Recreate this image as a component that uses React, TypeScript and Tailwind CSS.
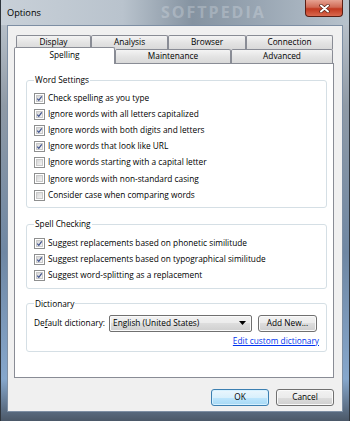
import React from 'react';

const wordSettings = [
  { label: 'Check spelling as you type', checked: true },
  { label: 'Ignore words with all letters capitalized', checked: true },
  { label: 'Ignore words with both digits and letters', checked: true },
  { label: 'Ignore words that look like URL', checked: true },
  { label: 'Ignore words starting with a capital letter', checked: false },
  { label: 'Ignore words with non-standard casing', checked: false },
  { label: 'Consider case when comparing words', checked: false },
];

const spellChecking = [
  { label: 'Suggest replacements based on phonetic similitude', checked: true },
  { label: 'Suggest replacements based on typographical similitude', checked: true },
  { label: 'Suggest word-splitting as a replacement', checked: true },
];

const tabBase =
  'flex items-center justify-center border border-[#898c95] rounded-t-[2px] bg-[linear-gradient(to_bottom,#f4f4f4,#e4e4e4_50%,#d9d9d9)]';

const btnBase =
  'flex items-center justify-center rounded-[3px] border text-[8.3px] h-[17px] w-[58px]';

function CheckBox({ checked }: { checked: boolean }) {
  return (
    <div className="w-[11px] h-[11px] shrink-0 border border-[#8e8f8f] bg-white p-px">
      <div className="w-full h-full bg-[linear-gradient(135deg,#d6d6d6,#f4f4f4)] border border-[#c9c9c9] flex items-center justify-center">
        {checked && (
          <svg width="9" height="9" viewBox="0 0 9 9" className="-m-px">
            <path d="M1.6 4.6 L3.6 6.8 L7.4 1.8" fill="none" stroke="#3b4f8c" strokeWidth="1.5" />
          </svg>
        )}
      </div>
    </div>
  );
}

function Row({ label, checked }: { label: string; checked: boolean }) {
  return (
    <div className="flex items-center h-[16.17px]">
      <CheckBox checked={checked} />
      <span className="ml-[3px] whitespace-nowrap">{label}</span>
    </div>
  );
}

export default function App() {
  return (
    <div className="relative w-[350px] h-[421px] overflow-hidden font-['Open_Sans',sans-serif] text-[8.3px] text-black bg-[linear-gradient(to_bottom,#c3cbd3,#8f9aa6_25%,#6f87a3_60%,#86a7cc_90%,#4b5868)] border-x border-[#2f353c]">
      {/* title bar */}
      <div className="relative h-[25px] flex items-center pl-[6px] bg-[linear-gradient(to_right,#c8d0d8,#b9c3cd_35%,#8593a1_55%,#9aa7b4_75%,#b7c2cc)]">
        <span className="text-[9.2px] leading-none">Options</span>
        <span className="absolute left-[160px] top-[4px] text-[16px] leading-none font-bold tracking-[2px] text-[#e4e9ee]/30 select-none">
          SOFTPEDIA
        </span>
        <div className="absolute right-[6px] top-0 w-[38px] h-[17px] rounded-b-[4px] border border-t-0 border-[#5a1e14] bg-[linear-gradient(to_bottom,#e6a292,#d06a55_45%,#c1381f_55%,#d9694f)] flex items-center justify-center">
          <svg width="11" height="9" viewBox="0 0 11 9">
            <path d="M2 1.5 L9 7.5 M9 1.5 L2 7.5" stroke="#5a2418" strokeWidth="3.4" strokeLinecap="round" />
            <path d="M2 1.5 L9 7.5 M9 1.5 L2 7.5" stroke="#ffffff" strokeWidth="2" strokeLinecap="round" />
          </svg>
        </div>
      </div>

      {/* client area */}
      <div className="mx-[6px] h-[387px] bg-[#f0f0f0] border border-[#7d8ea3] flex flex-col pt-[9px] pl-[6px] pr-[8px]">
        <div className="w-[320px]">
          {/* tab rows */}
          <div className="flex pl-[2px] h-[14px]">
            <div className={`${tabBase} w-[75px] border-b-0`}>Display</div>
            <div className={`${tabBase} w-[77px] border-b-0`}>Analysis</div>
            <div className={`${tabBase} w-[78px] border-b-0`}>Browser</div>
            <div className={`${tabBase} w-[87px] border-b-0`}>Connection</div>
          </div>
          <div className="flex items-end h-[14px]">
            <div className="relative z-10 w-[101px] h-[17px] -mb-px border border-b-0 border-[#898c95] rounded-t-[2px] bg-white flex items-center justify-center pb-[2px]">
              Spelling
            </div>
            <div className={`${tabBase} w-[116px] h-[14px] border-b-0`}>Maintenance</div>
            <div className={`${tabBase} w-[102px] h-[14px] border-b-0`}>Advanced</div>
          </div>

          {/* panel */}
          <div className="h-[315px] bg-white border border-[#898c95] pt-[8px] pl-[11px] pr-[6px]">
            <fieldset className="border border-[#d5dfe5] rounded-[3px] px-[7px] pt-[2px] pb-[4px]">
              <legend className="px-[1px] leading-[16px]">Word Settings</legend>
              {wordSettings.map((r) => (
                <Row key={r.label} label={r.label} checked={r.checked} />
              ))}
            </fieldset>

            <fieldset className="mt-[8px] border border-[#d5dfe5] rounded-[3px] px-[7px] pt-[3px] pb-[4px]">
              <legend className="px-[1px] leading-[16px]">Spell Checking</legend>
              {spellChecking.map((r) => (
                <Row key={r.label} label={r.label} checked={r.checked} />
              ))}
            </fieldset>

            <fieldset className="mt-[7px] border border-[#d5dfe5] rounded-[3px] px-[7px] pt-[3px] pb-[4px]">
              <legend className="px-[1px] leading-[16px]">Dictionary</legend>
              <div className="flex items-center h-[17px]">
                <span className="whitespace-nowrap">
                  De<span className="underline">f</span>ault dictionary:
                </span>
                <div className="ml-[4px] w-[143px] h-[17px] rounded-[2px] border border-[#707070] bg-[linear-gradient(to_bottom,#f2f2f2,#ebebeb_50%,#dddddd_50%,#cfcfcf)] shadow-[inset_0_0_0_1px_#fafafa] flex items-center pl-[3px] pr-[5px]">
                  <span className="flex-1">English (United States)</span>
                  <svg width="7" height="4" viewBox="0 0 7 4">
                    <path d="M0 0 L7 0 L3.5 4 Z" fill="#000" />
                  </svg>
                </div>
                <div className={`${btnBase} ml-[6px] w-[59px] border-[#707070] bg-[linear-gradient(to_bottom,#f2f2f2,#ebebeb_50%,#dddddd_50%,#cfcfcf)] shadow-[inset_0_0_0_1px_#fafafa]`}>
                  Add New...
                </div>
              </div>
              <div className="mt-[3px] flex justify-end leading-[12px]">
                <span className="text-[#0033ee] underline">Edit custom dictionary</span>
              </div>
            </fieldset>
          </div>
        </div>

        {/* buttons */}
        <div className="mt-[11px] flex justify-end gap-[7px]">
          <div className={`${btnBase} border-[#3c7fb1] bg-[linear-gradient(to_bottom,#eaf6fd,#d9f0fc_50%,#bee6fd_50%,#a7d9f5)] shadow-[inset_0_0_0_1px_#d6f1ff]`}>
            OK
          </div>
          <div className={`${btnBase} border-[#707070] bg-[linear-gradient(to_bottom,#f2f2f2,#ebebeb_50%,#dddddd_50%,#cfcfcf)] shadow-[inset_0_0_0_1px_#fafafa]`}>
            Cancel
          </div>
        </div>
      </div>
    </div>
  );
}
